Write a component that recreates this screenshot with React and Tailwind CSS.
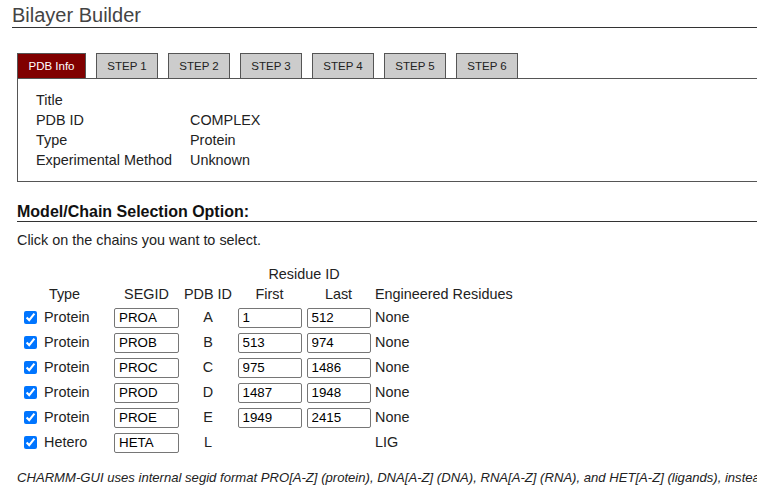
import React from "react";

const tabs = ["STEP 1", "STEP 2", "STEP 3", "STEP 4", "STEP 5", "STEP 6"];

const info = [
  ["Title", ""],
  ["PDB ID", "COMPLEX"],
  ["Type", "Protein"],
  ["Experimental Method", "Unknown"],
];

const chains = [
  { type: "Protein", segid: "PROA", pdb: "A", first: "1", last: "512", eng: "None" },
  { type: "Protein", segid: "PROB", pdb: "B", first: "513", last: "974", eng: "None" },
  { type: "Protein", segid: "PROC", pdb: "C", first: "975", last: "1486", eng: "None" },
  { type: "Protein", segid: "PROD", pdb: "D", first: "1487", last: "1948", eng: "None" },
  { type: "Protein", segid: "PROE", pdb: "E", first: "1949", last: "2415", eng: "None" },
  { type: "Hetero", segid: "HETA", pdb: "L", first: null, last: null, eng: "LIG" },
];

function Field({ value, width }) {
  return (
    <input
      type="text"
      defaultValue={value}
      className={`${width} h-[20px] border border-[#767676] rounded-[2px] pl-[4px] text-[13.33px] text-black bg-white outline-none`}
    />
  );
}

export default function App() {
  return (
    <div className="w-[757px] h-[496px] overflow-hidden bg-white text-[#222] font-['Liberation_Sans',Arial,sans-serif]">
      <div className="w-[1100px] pl-[12px]">
        <h1 className="pt-[4px] text-[20px] leading-[23px] text-[#444] border-b border-[#333]">
          Bilayer Builder
        </h1>

        <div className="ml-[5px]">
          {/* tabs */}
          <div className="mt-[25px] flex items-end gap-[10px]">
            <div className="w-[69px] h-[25px] pt-[1px] flex items-center justify-center bg-[#800000] border border-b-0 border-[#555] text-white text-[11.5px]">
              PDB Info
            </div>
            {tabs.map((t) => (
              <div
                key={t}
                className="w-[62px] h-[25px] pt-[1px] flex items-center justify-center bg-[#cccccc] border border-b-0 border-[#555] text-[#222] text-[11.5px]"
              >
                {t}
              </div>
            ))}
          </div>

          {/* pdb info box */}
          <div className="border border-[#555] pl-[18px] py-[11px] text-[14.4px] leading-[20px]">
            {info.map(([k, v]) => (
              <div key={k} className="grid grid-cols-[154px_auto]">
                <span>{k}</span>
                <span>{v}</span>
              </div>
            ))}
          </div>

          <h2 className="mt-[20px] text-[16px] leading-[19px] font-bold text-[#111] border-b border-[#333]">
            Model/Chain Selection Option:
          </h2>
          <p className="mt-[8px] text-[14.4px] leading-[20px]">
            Click on the chains you want to select.
          </p>

          {/* chain table */}
          <div className="mt-[14px] grid grid-cols-[95px_69px_54px_69px_69px_auto] text-[14.4px] w-[700px]">
            <div className="col-span-3 h-[20px]" />
            <div className="col-span-2 h-[20px] leading-[20px] text-center">Residue ID</div>
            <div />

            <div className="h-[21px] leading-[21px] text-center">Type</div>
            <div className="h-[21px] leading-[21px] text-center">SEGID</div>
            <div className="h-[21px] leading-[21px] text-center">PDB ID</div>
            <div className="h-[21px] leading-[21px] text-center">First</div>
            <div className="h-[21px] leading-[21px] text-center">Last</div>
            <div className="h-[21px] leading-[21px] pl-[2px]">Engineered Residues</div>

            {chains.map((c) => (
              <React.Fragment key={c.segid}>
                <div className="h-[25px] flex items-center pl-[7px] gap-[7px]">
                  <input type="checkbox" defaultChecked className="w-[13px] h-[13px] m-0 accent-[#0075ff]" />
                  <span>{c.type}</span>
                </div>
                <div className="h-[25px] flex items-center justify-center">
                  <Field value={c.segid} width="w-[65px]" />
                </div>
                <div className="h-[25px] flex items-center justify-center">{c.pdb}</div>
                <div className="h-[25px] flex items-center justify-center">
                  {c.first !== null && <Field value={c.first} width="w-[64px]" />}
                </div>
                <div className="h-[25px] flex items-center justify-center">
                  {c.last !== null && <Field value={c.last} width="w-[64px]" />}
                </div>
                <div className="h-[25px] flex items-center pl-[2px]">{c.eng}</div>
              </React.Fragment>
            ))}
          </div>

          <p className="mt-[15px] text-[13.1px] leading-[16px] italic text-[#222] whitespace-nowrap">
            CHARMM-GUI uses internal segid format PRO[A-Z] (protein), DNA[A-Z] (DNA), RNA[A-Z] (RNA), and HET[A-Z] (ligands), instead of the segid in the original PDB file.
          </p>
        </div>
      </div>
    </div>
  );
}
